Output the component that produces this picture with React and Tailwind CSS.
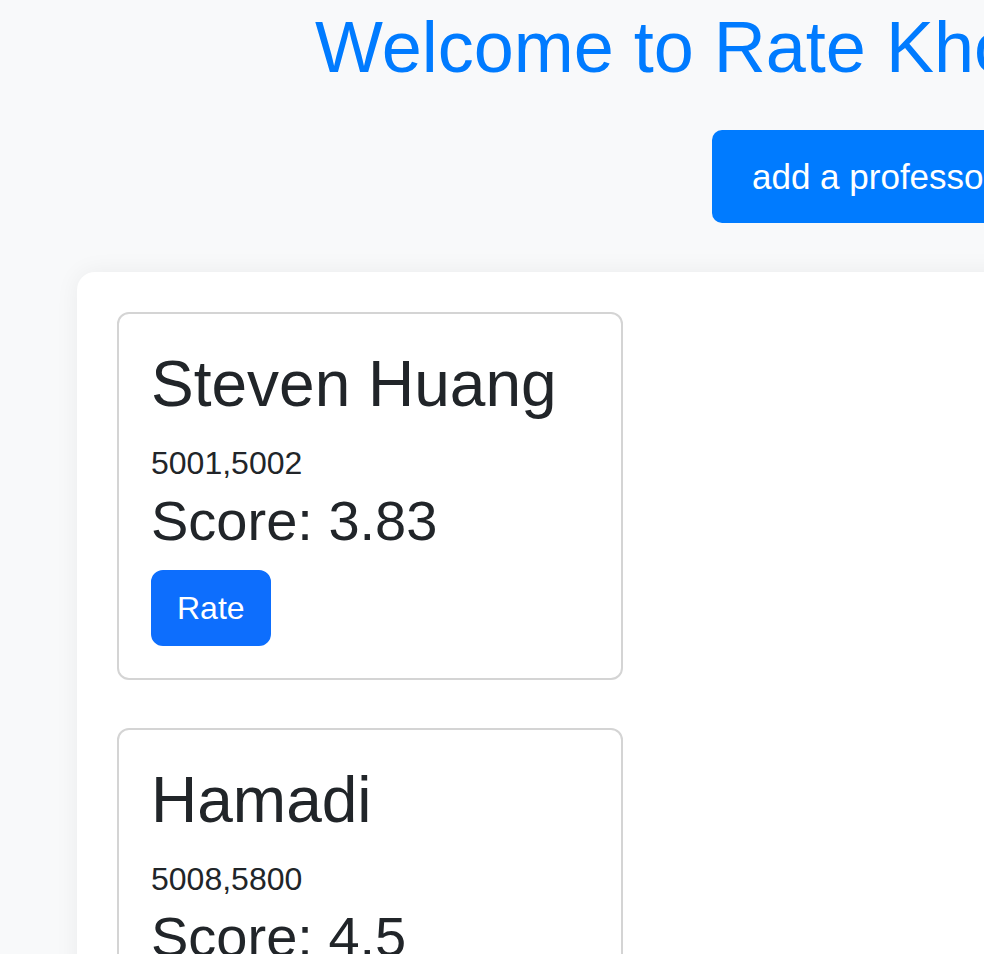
const professors = [
  { name: 'Steven Huang', courses: '5001,5002', score: '3.83' },
  { name: 'Hamadi', courses: '5008,5800', score: '4.5' },
]

function ProfCard({ p }) {
  return (
    <div className="w-[506px] border-2 border-[#d4d4d4] rounded-[12px] p-[32px] mb-[48px]">
      <h2 className="text-[64px] leading-[1.2] mb-[16px] text-[#212529]">{p.name}</h2>
      <p className="text-[32px] leading-[1.5] text-[#212529]">{p.courses}</p>
      <h3 className="text-[56px] leading-[1.2] mb-[16px] text-[#212529]">Score: {p.score}</h3>
      <button className="bg-[#0d6efd] text-white text-[32px] leading-[1.5] px-[24px] py-[12px] border-2 border-[#0d6efd] rounded-[12px]">
        Rate
      </button>
    </div>
  )
}

export default function App() {
  return (
    <div className="w-[984px] h-[954px] overflow-hidden bg-[#f8f9fa] font-['Liberation_Sans',Arial,sans-serif]">
      <div className="w-[1800px] pt-[4px]">
        <h1 className="ml-[315px] text-[72px] leading-[1.2] text-[#007bff] whitespace-nowrap">
          Welcome to Rate Khoury Professors
        </h1>
        <button className="ml-[712px] mt-[40px] h-[93px] px-[40px] rounded-[10px] bg-[#007bff] text-white text-[35px] whitespace-nowrap">
          add a professor
        </button>
        <div className="ml-[77px] mt-[49px] w-[1640px] bg-white rounded-[18px] shadow-[0_0_24px_rgba(0,0,0,0.06)] p-[40px]">
          {professors.map((p) => <ProfCard key={p.name} p={p} />)}
        </div>
      </div>
    </div>
  )
}
